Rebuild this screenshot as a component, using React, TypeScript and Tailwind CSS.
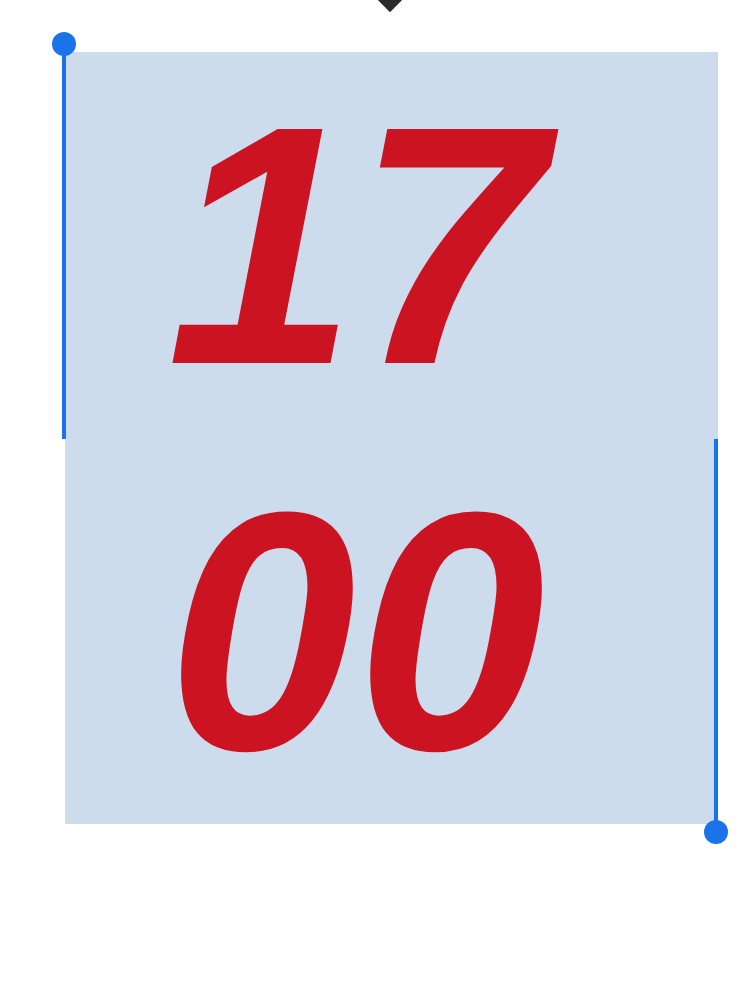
export default function App() {
  return (
    <div className="relative h-[1000px] w-[750px] overflow-hidden bg-white">
      {/* caret arrow at the top */}
      <div className="absolute left-[380px] top-[-12px] h-[20px] w-[20px] rotate-45 bg-[#2b2b2b]" />

      <div className="pl-[65px] pt-[52px]">
        <div className="relative w-[653px] bg-[#cddcec]">
          <div className="pl-[102px] font-['Liberation_Sans',Arial,sans-serif] text-[340px] font-bold italic leading-[386px] text-[#cc1321]">
            <div>17</div>
            <div>00</div>
          </div>

          {/* selection handles */}
          <div className="absolute -left-[3px] -top-[8px] h-[395px] w-[4px] bg-[#1a73e8]" />
          <div className="absolute -left-[13px] -top-[20px] h-[24px] w-[24px] rounded-full bg-[#1a73e8]" />
          <div className="absolute -right-[0px] top-[387px] h-[393px] w-[4px] bg-[#1a73e8]" />
          <div className="absolute -right-[10px] top-[768px] h-[24px] w-[24px] rounded-full bg-[#1a73e8]" />
        </div>
      </div>
    </div>
  );
}
